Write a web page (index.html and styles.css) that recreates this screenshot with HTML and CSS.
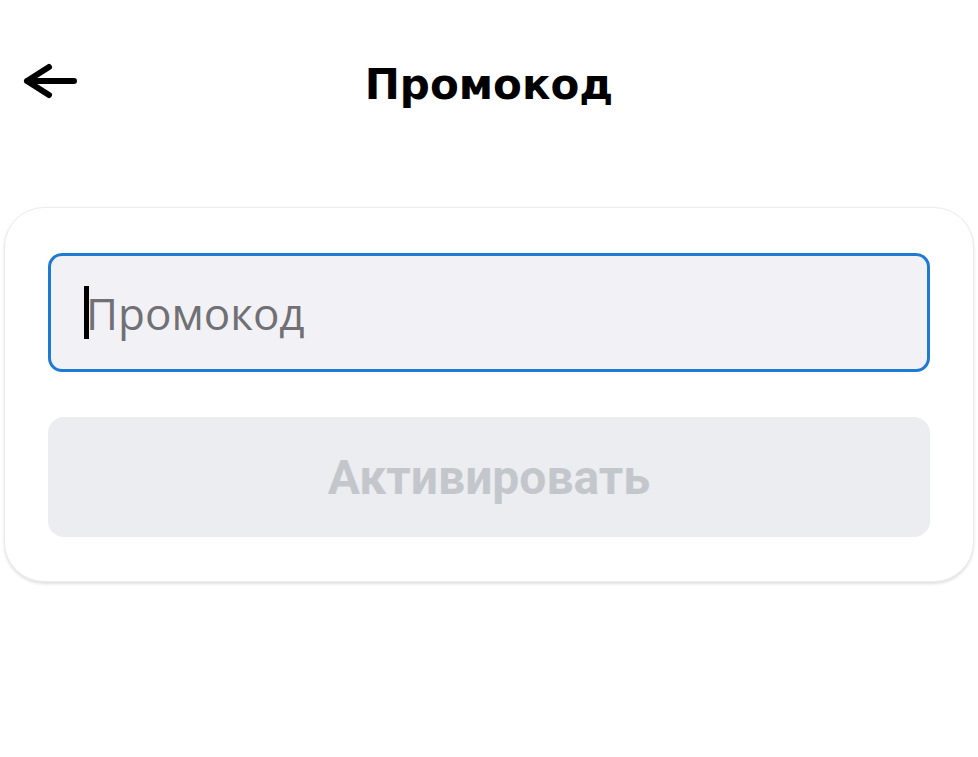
FILE: index.html
```html
<!DOCTYPE html>
<html lang="ru">
<head>
<meta charset="utf-8">
<link rel="stylesheet" href="styles.css">
</head>
<body>
<div class="page">
  <header class="topbar">
    <button class="back" aria-label="Назад">
      <svg width="56" height="40" viewBox="0 0 56 40"><path d="M4 20H51M4 20L26 6M4 20L26 34" fill="none" stroke="#000" stroke-width="6" stroke-linecap="round" stroke-linejoin="round"/></svg>
    </button>
    <h1 class="title">Промокод</h1>
  </header>
  <section class="card">
    <div class="field">
      <span class="caret"></span><span class="placeholder">Промокод</span>
    </div>
    <button class="activate">Активировать</button>
  </section>
</div>
</body>
</html>
```
FILE: styles.css
```css
* { box-sizing: border-box; }
html, body { margin: 0; background: #fff; }
body { font-family: Roboto, "Noto Sans", sans-serif; width: 978px; height: 757px; overflow: hidden; }
.page { padding: 0 4px; }
.topbar { position: relative; height: 166px; display: flex; align-items: flex-start; justify-content: center; }
.back { position: absolute; left: 19px; top: 61px; border: 0; background: none; padding: 0; width: 56px; height: 40px; }
.back svg { display: block; }
.title { margin: 0; padding-top: 55px; font-family: "DejaVu Sans", sans-serif; font-weight: 700; font-size: 42px; line-height: 60px; color: #000; letter-spacing: 0; }
.card { margin-top: 41px; background: #fff; border: 1px solid #ececec; border-radius: 40px; box-shadow: 0 2px 3px rgba(0,0,0,0.12); padding: 45px 43px 44px; display: flex; flex-direction: column; gap: 45px; }
.field { height: 119px; border: 3px solid #1f7bd2; border-radius: 14px; background: #f2f2f6; display: flex; align-items: center; padding-left: 33px; }
.caret { width: 5px; height: 53px; background: #000; margin-right: -3px; }
.placeholder { font-size: 44px; color: #707075; font-family: "Open Sans", Roboto, sans-serif; line-height: 1; }
.activate { height: 120px; border: 0; border-radius: 16px; background: #ebedf0; color: #c3c7cc; font-family: Roboto, sans-serif; font-weight: 700; font-size: 48px; }
```
